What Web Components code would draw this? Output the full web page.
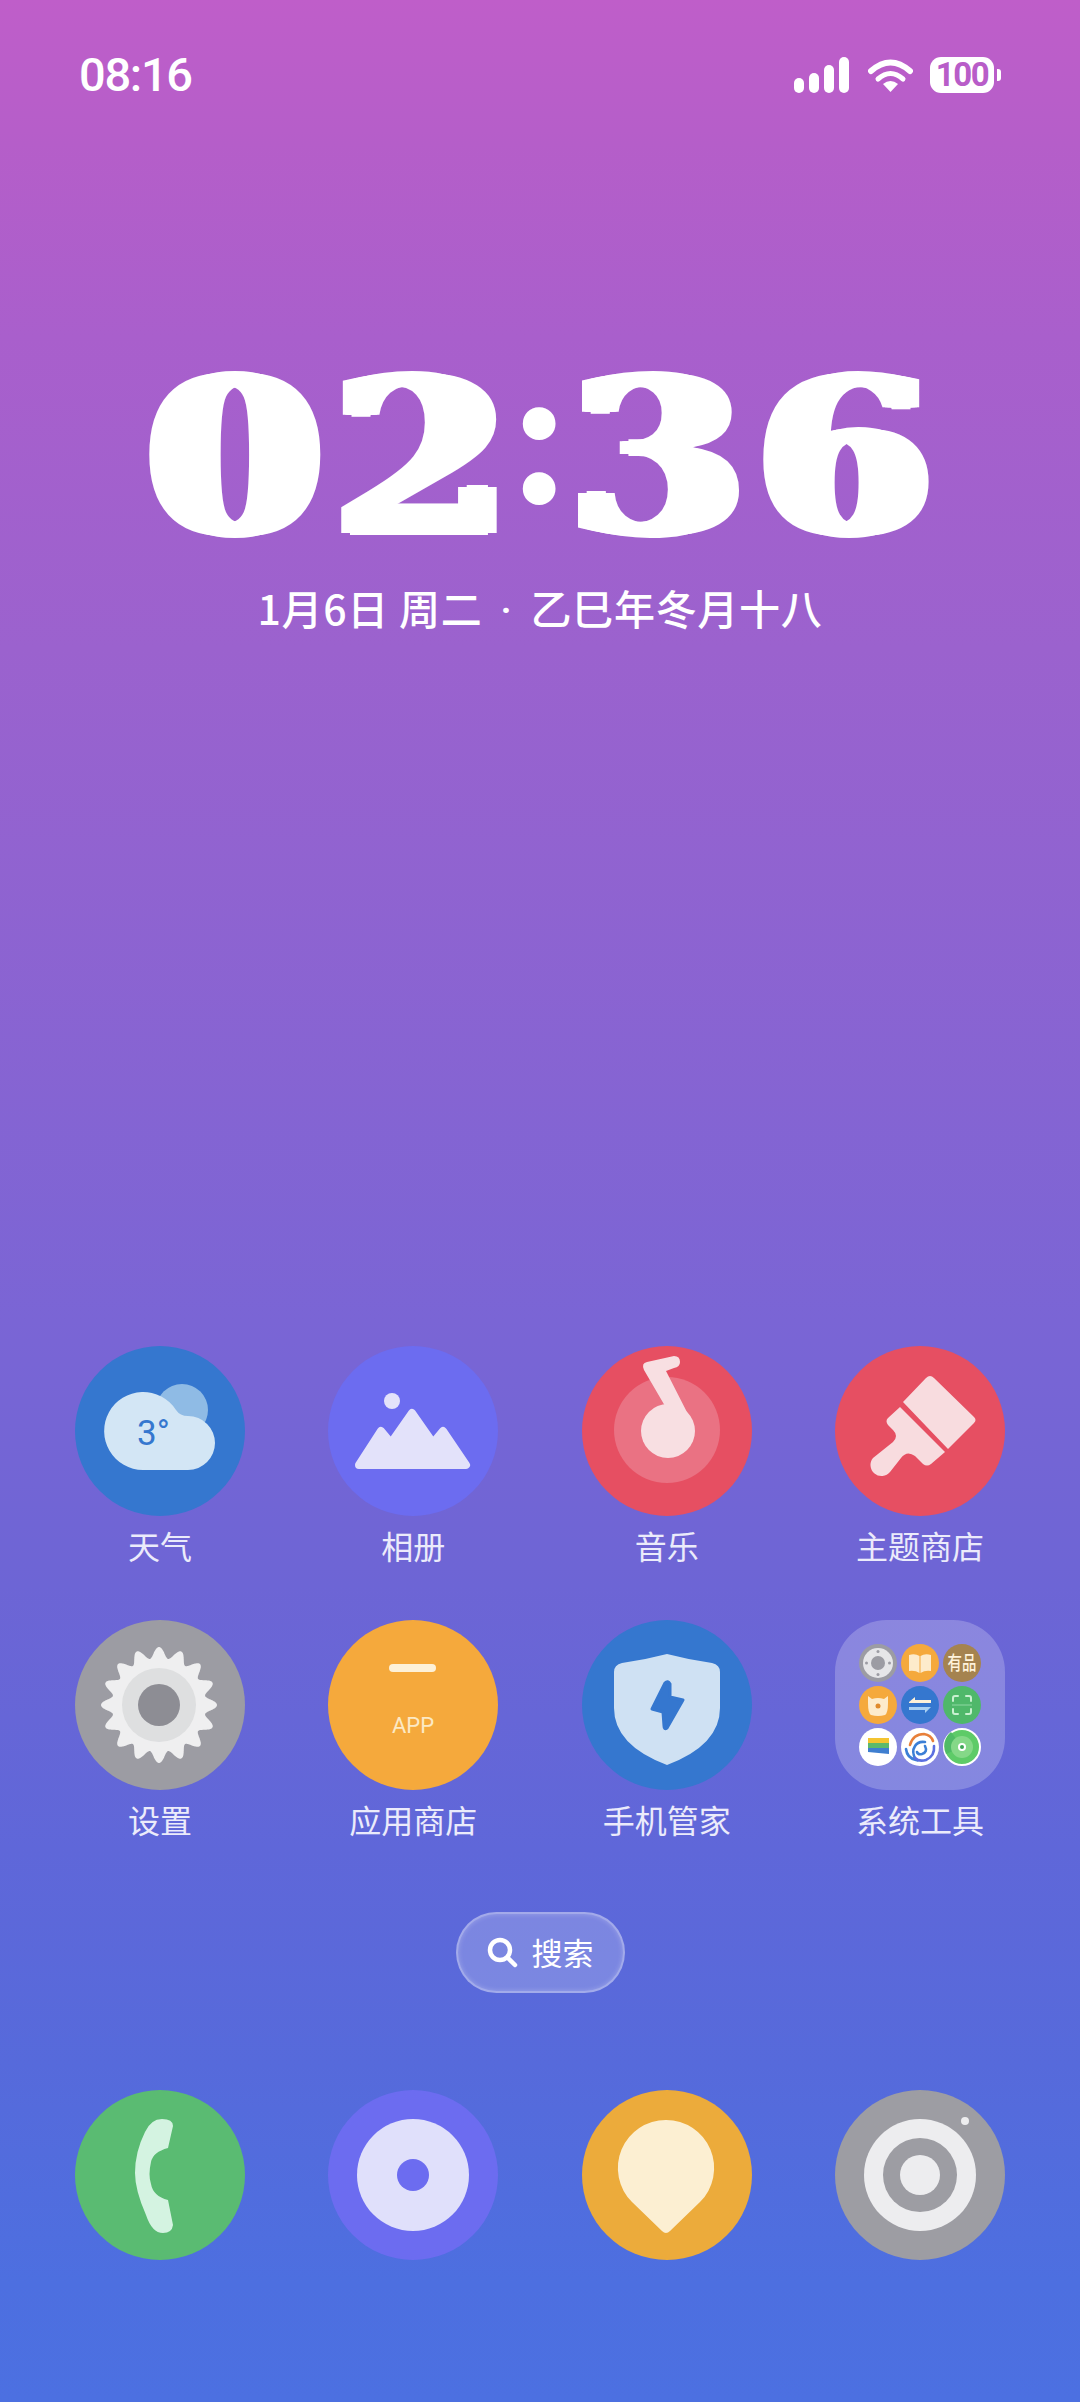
<!DOCTYPE html>
<html lang="zh">
<head>
<meta charset="utf-8">
<title>Home</title>
<style>
  html, body { margin: 0; padding: 0; }
  body { width: 1080px; height: 2402px; overflow: hidden; }
  svg { display: block; }
</style>
</head>
<body>
<home-screen>
  <status-bar slot="status" time="08:16" battery="100"></status-bar>
  <clock-widget slot="clock" hours="02" minutes="36" date="1月6日 周二" lunar="乙巳年冬月十八"></clock-widget>

  <app-icon slot="apps" label="天气">
    <svg viewBox="0 0 170 170" width="170" height="170">
      <circle cx="85" cy="85" r="85" fill="#3577cf"/>
      <circle cx="107" cy="64" r="26" fill="#8fbbe5"/>
      <path d="M68 124 A39 39 0 1 1 101 64 Q105 70 113 70 A27 27 0 0 1 113 124 Z" fill="#d3e6f5"/>
      <text x="62" y="99" font-family="Roboto, sans-serif" font-size="35" fill="#3577cf">3°</text>
    </svg>
  </app-icon>
  <app-icon slot="apps" label="相册">
    <svg viewBox="0 0 170 170" width="170" height="170">
      <circle cx="85" cy="85" r="85" fill="#6c6cf0"/>
      <circle cx="64" cy="55" r="8" fill="#e3e2fa"/>
      <path d="M31 119 L53 85 L63 97 L84 67 L105 97 L115 85 L138 119 Z" fill="#e3e2fa" stroke="#e3e2fa" stroke-width="8" stroke-linejoin="round"/>
    </svg>
  </app-icon>
  <app-icon slot="apps" label="音乐">
    <svg viewBox="0 0 170 170" width="170" height="170">
      <circle cx="85" cy="85" r="85" fill="#e64f62"/>
      <circle cx="85" cy="84" r="53" fill="#ea7283"/>
      <circle cx="86" cy="85" r="27" fill="#f8dfe2"/>
      <path d="M62 24 Q59 17 65 16 L92 10 Q98 10 98 16 Q98 21 92 22 L84 25 L111 78 L83 60 Z" fill="#f8dfe2"/>
    </svg>
  </app-icon>
  <app-icon slot="apps" label="主题商店">
    <svg viewBox="0 0 170 170" width="170" height="170">
      <circle cx="85" cy="85" r="85" fill="#e64f62"/>
      <path d="M91 32 Q95 28 99 32 L139 71 Q142 74 139 77 L113 103 L68 56 Z" fill="#f8dcdf"/>
      <path d="M65 61 L110 106 L96 118 Q92 121 88 118 L80 110 Q72 104 66 112 L55 126 A11 11 0 0 1 38 112 L58 96 Q64 90 58 84 L53 79 Q50 75 53 72 Z" fill="#f8dcdf"/>
    </svg>
  </app-icon>

  <app-icon slot="apps" label="设置">
    <svg viewBox="0 0 170 170" width="170" height="170">
      <circle cx="85" cy="85" r="85" fill="#9c9ca3"/>
      <path id="gear" fill="#efeff0"/>
      <circle cx="84" cy="85" r="37" fill="#dedfe0"/>
      <circle cx="84" cy="85" r="21" fill="#8d8d94"/>
    </svg>
  </app-icon>
  <app-icon slot="apps" label="应用商店">
    <svg viewBox="0 0 170 170" width="170" height="170">
      <circle cx="85" cy="85" r="85" fill="#f5a93c"/>
      <rect x="61" y="44" width="47" height="8" rx="4" fill="#fdf1d8"/>
      <text x="85" y="113" text-anchor="middle" font-family="Roboto, sans-serif" font-size="22" fill="#fce9c4">APP</text>
    </svg>
  </app-icon>
  <app-icon slot="apps" label="手机管家">
    <svg viewBox="0 0 170 170" width="170" height="170">
      <circle cx="85" cy="85" r="85" fill="#3577cf"/>
      <path d="M85 34 Q108 40 130 43 Q138 45 138 52 L138 88 Q138 125 85 145 Q32 125 32 88 L32 52 Q32 45 40 43 Q62 40 85 34 Z" fill="#cfe1f3"/>
      <path d="M83 63 Q86 60 88 64 L88 77 L101 80 L85 108 Q82 110 82 106 L81 92 L70 89 Z" fill="#3577cf" stroke="#3577cf" stroke-width="3" stroke-linejoin="round"/>
    </svg>
  </app-icon>
  <folder-icon slot="apps" label="系统工具">
    <svg viewBox="0 0 38 38" width="38" height="38">
      <circle cx="19" cy="19" r="19" fill="#9c9ca3"/>
      <circle cx="19" cy="19" r="15" fill="#e6e6e8"/>
      <circle cx="19" cy="19" r="7" fill="#9c9ca3"/>
      <g fill="#9c9ca3"><circle cx="19" cy="7.500" r="1.500"/><circle cx="19" cy="30.500" r="1.500"/><circle cx="7.500" cy="19" r="1.500"/><circle cx="30.500" cy="19" r="1.500"/></g>
    </svg>
    <svg viewBox="0 0 38 38" width="38" height="38">
      <circle cx="19" cy="19" r="19" fill="#f5a93c"/>
      <path d="M8 11 Q14 9 18.500 12 L18.500 29 Q14 26 8 27 Z M19.500 12 Q24 9 30 11 L30 27 Q24 26 19.500 29 Z" fill="#fdebcb"/>
    </svg>
    <svg viewBox="0 0 38 38" width="38" height="38">
      <circle cx="19" cy="19" r="19" fill="#a5834f"/>
      <text transform="translate(19 25.500) scale(.9 1.200)" text-anchor="middle" font-family="'Noto Sans CJK SC', sans-serif" font-weight="500" font-size="16" fill="#fff3dc">有品</text>
    </svg>
    <svg viewBox="0 0 38 38" width="38" height="38">
      <circle cx="19" cy="19" r="19" fill="#f5a93c"/>
      <path d="M9 10 L13 13 Q19 11 25 13 L29 10 L29 17 Q29 27 26 29 Q19 31 12 29 Q9 27 9 17 Z" fill="#fdebcb"/>
      <circle cx="19" cy="20" r="2.500" fill="#e08a2c"/>
    </svg>
    <svg viewBox="0 0 38 38" width="38" height="38">
      <circle cx="19" cy="19" r="19" fill="#3577cf"/>
      <path d="M8 16 L14 11 L14 14 L30 14 L30 17 L8 17 Z" fill="#fdf1d8"/>
      <path d="M8 21 L30 21 L24 27 L24 24 L8 24 Z" fill="#a9d0f2"/>
    </svg>
    <svg viewBox="0 0 38 38" width="38" height="38">
      <circle cx="19" cy="19" r="19" fill="#4fb86a"/>
      <path d="M10 15 L10 12 Q10 10 12 10 L15 10 M23 10 L26 10 Q28 10 28 12 L28 15 M28 23 L28 26 Q28 28 26 28 L23 28 M15 28 L12 28 Q10 28 10 26 L10 23" fill="none" stroke="#c9f0d0" stroke-width="2" stroke-linecap="round"/>
      <path d="M9 19 L29 19" stroke="#8fd8a2" stroke-width="1"/>
    </svg>
    <svg viewBox="0 0 38 38" width="38" height="38">
      <circle cx="19" cy="19" r="19" fill="#ffffff"/>
      <path d="M9 10 L30 10 L30 15 L9 15 Z" fill="#f4c430"/>
      <path d="M9 15 L30 15 L30 20 L9 20 Z" fill="#5cb96c"/>
      <path d="M9 20 L30 20 L30 26 L9 24 Z" fill="#3f7fd0"/>
    </svg>
    <svg viewBox="0 0 38 38" width="38" height="38">
      <circle cx="19" cy="19" r="19" fill="#ffffff"/>
      <g fill="none" stroke-width="2.600" stroke-linecap="round">
        <path d="M9 17 Q12 6 23 6 Q30 7 32 13" stroke="#e8803a"/>
        <path d="M5 21 Q6 30 15 32 Q10 24 14 18 Q17 13 24 14" stroke="#3c7fd6"/>
        <path d="M33 18 Q34 28 25 32 Q18 34 14 30" stroke="#5b6fe0"/>
        <path d="M24 18 Q27 24 21 26 Q17 27 16 24" stroke="#3c7fd6"/>
      </g>
    </svg>
    <svg viewBox="0 0 38 38" width="38" height="38">
      <circle cx="19" cy="19" r="18" fill="#5ecb68" stroke="#ffffff" stroke-width="2"/>
      <path d="M19 19 L8 4 A18 18 0 0 0 3 26 Z" fill="#4fbb66"/>
      <circle cx="19" cy="19" r="11" fill="#85d888"/>
      <circle cx="19" cy="19" r="4" fill="#ffffff"/>
      <circle cx="19" cy="19" r="2" fill="#3fa657"/>
    </svg>
  </folder-icon>

  <search-pill slot="search" label="搜索"></search-pill>

  <app-icon slot="dock">
    <svg viewBox="0 0 170 170" width="170" height="170">
      <circle cx="85" cy="85" r="85" fill="#5abb72"/>
      <path d="M87 29 Q98 29 98 36 L93 58 Q78 62 76 72 Q73 85 76 94 Q78 106 93 110 L98 135 Q97 143 88 143 Q77 143 71 125 Q60 100 60 83 Q60 62 70 42 Q76 29 87 29 Z" fill="#d4f3e1"/>
    </svg>
  </app-icon>
  <app-icon slot="dock">
    <svg viewBox="0 0 170 170" width="170" height="170">
      <circle cx="85" cy="85" r="85" fill="#6c6cf0"/>
      <circle cx="85" cy="85" r="56" fill="#e0e0fb"/>
      <circle cx="85" cy="85" r="16" fill="#6c6cf0"/>
    </svg>
  </app-icon>
  <app-icon slot="dock">
    <svg viewBox="0 0 170 170" width="170" height="170">
      <circle cx="85" cy="85" r="85" fill="#ecab3b"/>
      <path d="M84 30 A48 48 0 0 1 118 112 L88 141 Q84 145 80 141 L50 112 A48 48 0 0 1 84 30 Z" fill="#fcefd2"/>
    </svg>
  </app-icon>
  <app-icon slot="dock">
    <svg viewBox="0 0 170 170" width="170" height="170">
      <circle cx="85" cy="85" r="85" fill="#9d9da3"/>
      <circle cx="85" cy="85" r="56" fill="#ededef"/>
      <circle cx="85" cy="85" r="37" fill="#9d9da3"/>
      <circle cx="85" cy="85" r="20" fill="#ededef"/>
      <circle cx="130" cy="31" r="4" fill="#ededef"/>
    </svg>
  </app-icon>
</home-screen>

<script>
const CJK = "'Noto Sans CJK SC', 'Noto Sans', sans-serif";

// Page shell: gradient wallpaper and the vertical stack of sections
class HomeScreen extends HTMLElement {
    constructor() {
        super();
        this.attachShadow({ mode: 'open' });
        this.shadowRoot.innerHTML = `
            <style>
                :host {
                    display: flex;
                    flex-direction: column;
                    width: 1080px;
                    height: 2402px;
                    background: linear-gradient(180deg, #bf5ec9 0%, #b55ec9 6%, #a95fcc 14%, #9b62ce 27%, #7a65d5 55%, #6d65d5 66%, #5f67d9 77%, #566adb 86%, #4d6fe0 95%, #4c70e1 100%);
                }
                .apps {
                    display: grid;
                    grid-template-columns: repeat(4, 1fr);
                    row-gap: 52.5px;
                    padding: 0 33.33px;
                    margin-top: 711px;
                }
                .search {
                    display: flex;
                    justify-content: center;
                    margin-top: 71px;
                }
                .dock {
                    display: grid;
                    grid-template-columns: repeat(4, 1fr);
                    padding: 0 33.33px;
                    margin-top: 97px;
                }
            </style>
            <slot name="status"></slot>
            <slot name="clock"></slot>
            <div class="apps"><slot name="apps"></slot></div>
            <div class="search"><slot name="search"></slot></div>
            <div class="dock"><slot name="dock"></slot></div>
        `;
    }
}

class StatusBar extends HTMLElement {
    constructor() {
        super();
        this.attachShadow({ mode: 'open' });
    }

    connectedCallback() {
        const time = this.getAttribute('time');
        const battery = this.getAttribute('battery');
        this.shadowRoot.innerHTML = `
            <style>
                :host {
                    display: flex;
                    align-items: center;
                    justify-content: space-between;
                    height: 56px;
                    padding: 47px 79px 0 79px;
                    color: #fff;
                }
                .time {
                    font: 500 47px/56px Roboto, sans-serif;
                    letter-spacing: -1.300px;
                }
                .icons {
                    display: flex;
                    align-items: center;
                    gap: 19px;
                }
                .signal {
                    display: flex;
                    align-items: flex-end;
                    gap: 5px;
                    height: 36px;
                    margin-left: -1px;
                }
                .signal i {
                    display: block;
                    width: 10px;
                    background: #fff;
                    border-radius: 5px;
                }
                .battery {
                    display: flex;
                    align-items: center;
                    gap: 3px;
                    margin-left: -2px;
                }
                .cell {
                    width: 64px;
                    height: 36px;
                    border-radius: 11px;
                    background: #fff;
                    color: #b85dc8;
                    font: 700 33px/36px Roboto, sans-serif;
                    letter-spacing: -1.500px;
                    text-align: center;
                }
                .nub {
                    width: 4px;
                    height: 12px;
                    background: #fff;
                    border-radius: 0 3px 3px 0;
                }
            </style>
            <div class="time">${time}</div>
            <div class="icons">
                <div class="signal">
                    <i style="height:15px"></i>
                    <i style="height:20px"></i>
                    <i style="height:28px"></i>
                    <i style="height:36px"></i>
                </div>
                <svg width="45" height="33" viewBox="0 0 45 33">
                    <path d="M3 12 Q22.500 -5 42 12" fill="none" stroke="#fff" stroke-width="6" stroke-linecap="round"/>
                    <path d="M10 20 Q22.500 9 35 20" fill="none" stroke="#fff" stroke-width="5" stroke-linecap="round"/>
                    <path d="M15 25 Q22.500 19 30 25 L22.500 33 Z" fill="#fff"/>
                </svg>
                <div class="battery">
                    <div class="cell">${battery}</div>
                    <div class="nub"></div>
                </div>
            </div>
        `;
    }
}

// Big clock with the lunar date under it
class ClockWidget extends HTMLElement {
    constructor() {
        super();
        this.attachShadow({ mode: 'open' });
    }

    connectedCallback() {
        const digit = (ch) => `<div class="cell"><span>${ch}</span></div>`;
        const hours = [...this.getAttribute('hours')].map(digit).join('');
        const minutes = [...this.getAttribute('minutes')].map(digit).join('');
        // no fat-face font here: smear sideways to thicken the stems only
        const smear = [1.5, 3, 4.5, 6, 7.5, 9.5]
            .flatMap((d) => [`${d}px 0 #fff`, `-${d}px 0 #fff`])
            .join(', ');
        this.shadowRoot.innerHTML = `
            <style>
                :host {
                    display: block;
                    color: #fff;
                    text-align: center;
                }
                .time {
                    display: flex;
                    justify-content: center;
                    margin-top: 260px;
                    height: 190px;
                    white-space: nowrap;
                }
                .cell {
                    display: flex;
                    justify-content: center;
                    width: 187px;
                    height: 190px;
                    font: 700 215px/190px 'DejaVu Serif', serif;
                    -webkit-text-stroke: 4px #fff;
                    text-shadow: ${smear};
                }
                .cell span {
                    display: block;
                    transform: scaleX(1.15);
                }
                .colon {
                    display: flex;
                    justify-content: center;
                    width: 49px;
                    height: 190px;
                    font: 700 202px/143px 'Liberation Serif', serif;
                }
                .date {
                    margin-top: 26px;
                    height: 56px;
                    font: 500 41px/56px ${CJK};
                    letter-spacing: 0.7px;
                    white-space: nowrap;
                }
                .dot {
                    font-family: Roboto, sans-serif;
                    margin: 0 8px;
                }
            </style>
            <div class="time">
                ${hours}
                <div class="colon">:</div>
                ${minutes}
            </div>
            <div class="date">${this.getAttribute('date')} <span class="dot">·</span> ${this.getAttribute('lunar')}</div>
        `;
    }
}

class AppIcon extends HTMLElement {
    constructor() {
        super();
        this.attachShadow({ mode: 'open' });
    }

    connectedCallback() {
        const label = this.getAttribute('label');
        this.shadowRoot.innerHTML = `
            <style>
                :host {
                    display: flex;
                    flex-direction: column;
                    align-items: center;
                }
                .art { width: 170px; height: 170px; }
                .label {
                    margin-top: 7px;
                    color: #ebebfb;
                    font: 400 32px/44px ${CJK};
                    white-space: nowrap;
                }
            </style>
            <div class="art"><slot></slot></div>
            ${label ? `<div class="label">${label}</div>` : ''}
        `;
    }
}

class FolderIcon extends HTMLElement {
    constructor() {
        super();
        this.attachShadow({ mode: 'open' });
    }

    connectedCallback() {
        this.shadowRoot.innerHTML = `
            <style>
                :host {
                    display: flex;
                    flex-direction: column;
                    align-items: center;
                }
                .art {
                    box-sizing: border-box;
                    display: grid;
                    grid-template-columns: repeat(3, 38px);
                    grid-auto-rows: 38px;
                    gap: 4px;
                    justify-content: center;
                    align-content: center;
                    width: 170px;
                    height: 170px;
                    border-radius: 52px;
                    background: rgba(255, 255, 255, 0.22);
                }
                .label {
                    margin-top: 7px;
                    color: #ebebfb;
                    font: 400 32px/44px ${CJK};
                    white-space: nowrap;
                }
            </style>
            <div class="art"><slot></slot></div>
            <div class="label">${this.getAttribute('label')}</div>
        `;
    }
}

class SearchPill extends HTMLElement {
    constructor() {
        super();
        this.attachShadow({ mode: 'open' });
    }

    connectedCallback() {
        this.shadowRoot.innerHTML = `
            <style>
                :host {
                    box-sizing: border-box;
                    display: flex;
                    align-items: center;
                    justify-content: center;
                    gap: 14px;
                    width: 169px;
                    height: 81px;
                    border-radius: 41px;
                    background: rgba(255, 255, 255, 0.2);
                    border: 2px solid rgba(255, 255, 255, 0.3);
                    box-shadow: inset 0 0 5px rgba(255, 255, 255, 0.25);
                    color: #fff;
                    font: 400 31px/44px ${CJK};
                }
            </style>
            <svg width="31" height="31" viewBox="0 0 31 31" style="display:block">
                <circle cx="13" cy="13" r="10" fill="none" stroke="#fff" stroke-width="4.500"/>
                <path d="M21 21 L28 28" stroke="#fff" stroke-width="4.500" stroke-linecap="round"/>
            </svg>
            <span>${this.getAttribute('label')}</span>
        `;
    }
}

customElements.define('home-screen', HomeScreen);
customElements.define('status-bar', StatusBar);
customElements.define('clock-widget', ClockWidget);
customElements.define('app-icon', AppIcon);
customElements.define('folder-icon', FolderIcon);
customElements.define('search-pill', SearchPill);

// Settings gear outline: 16 rounded teeth around the hub
(function buildGear() {
    const cx = 84, cy = 85, teeth = 16, points = [];
    for (let i = 0; i < 720; i++) {
        const a = i * Math.PI / 360;
        const r = 52.5 + 5.5 * Math.cos(teeth * a);
        points.push((cx + r * Math.cos(a)).toFixed(1) + ' ' + (cy + r * Math.sin(a)).toFixed(1));
    }
    document.getElementById('gear').setAttribute('d', 'M' + points.join(' L') + ' Z');
})();
</script>
</body>
</html>
